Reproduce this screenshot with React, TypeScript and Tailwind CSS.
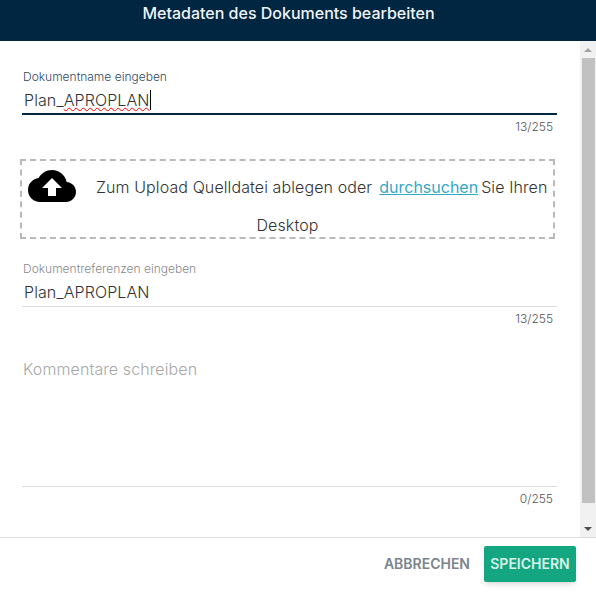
const inter = "font-['Inter','Noto_Sans',sans-serif]";

function CloudIcon() {
  return (
    <svg viewBox="0 0 24 16" className="h-8 w-12 shrink-0" aria-hidden="true">
      <path
        fill="#000"
        d="M19.35 6.04C18.67 2.59 15.64 0 12 0 9.11 0 6.6 1.64 5.35 4.04 2.34 4.36 0 6.91 0 10c0 3.31 2.69 6 6 6h13c2.76 0 5-2.24 5-5 0-2.64-2.05-4.78-4.65-4.96z"
      />
      <path fill="#fff" d="M14 9v4h-4V9H7l5-5 5 5z" />
    </svg>
  );
}

function Counter({ children }: { children: string }) {
  return <div className="pr-1 text-right text-xs leading-4 font-light text-[#555]">{children}</div>;
}

function Scrollbar() {
  return (
    <div className="flex w-4 shrink-0 flex-col items-center bg-[#f1f1f1]">
      <div className="flex h-[17px] w-full items-center justify-center">
        <div className="h-0 w-0 border-x-4 border-b-4 border-x-transparent border-b-[#a3a3a3]" />
      </div>
      <div className="h-[445px] w-[13px] bg-[#c1c1c1]" />
      <div className="flex-1" />
      <div className="flex h-[17px] w-full items-center justify-center">
        <div className="h-0 w-0 border-x-4 border-t-4 border-x-transparent border-t-[#505050]" />
      </div>
    </div>
  );
}

export default function App() {
  return (
    <div className={`flex h-[601px] w-[596px] flex-col overflow-hidden bg-white ${inter}`}>
      <header className="flex h-[41px] shrink-0 justify-center bg-[#002641] pr-[19px] pt-[4px]">
        <h1 className="text-base leading-[18px] font-medium text-[#f0f3f5]">
          Metadaten des Dokuments bearbeiten
        </h1>
      </header>

      <div className="flex h-[496px] shrink-0">
        <main className="min-w-0 flex-1 pl-[22px] pr-[23px] pt-[29px]">
          <label className="block pl-px text-xs leading-[14px] font-light text-[#2f4a63]">
            Dokumentname eingeben
          </label>
          <div className="mt-[2px] flex h-[29px] items-center border-b-2 border-[#002641] pl-[2px] text-base font-light tracking-[0.1px] text-[#333]">
            Plan_
            <span className="underline decoration-[#f00000] decoration-wavy decoration-1">APROPLAN</span>
            <span className="h-5 w-px bg-black" />
          </div>
          <div className="mt-[4px]">
            <Counter>13/255</Counter>
          </div>

          <div className="mt-[24px] -ml-[2px] mr-[2px] flex h-[80px] flex-col border-2 border-dashed border-[#b9b9b9] pl-[6px] pr-[6px] text-base font-light tracking-[0.1px] text-[#333]">
            <div className="flex items-start pt-[9px]">
              <CloudIcon />
              <div className="ml-[20px] pt-[5px] leading-6 whitespace-nowrap">
                Zum Upload Quelldatei ablegen oder
                <a className="ml-[7px] font-normal tracking-normal text-[#35a8c4] underline">durchsuchen</a>
                <span className="ml-[3px]">Sie Ihren</span>
              </div>
            </div>
            <div className="mt-[11px] text-center leading-6">Desktop</div>
          </div>

          <label className="mt-[23px] block pl-px text-xs leading-[14px] font-light text-[#8a8a8a]">
            Dokumentreferenzen eingeben
          </label>
          <div className="mt-[2px] flex h-[29px] items-center border-b border-[#dcdcdc] pl-[2px] text-base font-light tracking-[0.1px] text-[#333]">
            Plan_APROPLAN
          </div>
          <div className="mt-[4px]">
            <Counter>13/255</Counter>
          </div>

          <div className="mt-[30px] h-[130px] border-b border-[#dcdcdc] pl-px text-base leading-6 font-light tracking-[0.1px] text-[#a8a8a8]">
            Kommentare schreiben
          </div>
          <div className="mt-[4px]">
            <Counter>0/255</Counter>
          </div>
        </main>
        <Scrollbar />
      </div>

      <footer className="flex flex-1 items-start justify-end gap-[14px] border-t border-[#dcdcdc] pr-[20px] pt-[8px]">
        <button className="h-9 text-sm font-semibold text-[#7b848c]">ABBRECHEN</button>
        <button className="h-9 w-[92px] rounded-[2px] bg-[#13a680] text-sm font-semibold text-[#d9f2ea] shadow-md">
          SPEICHERN
        </button>
      </footer>
    </div>
  );
}
